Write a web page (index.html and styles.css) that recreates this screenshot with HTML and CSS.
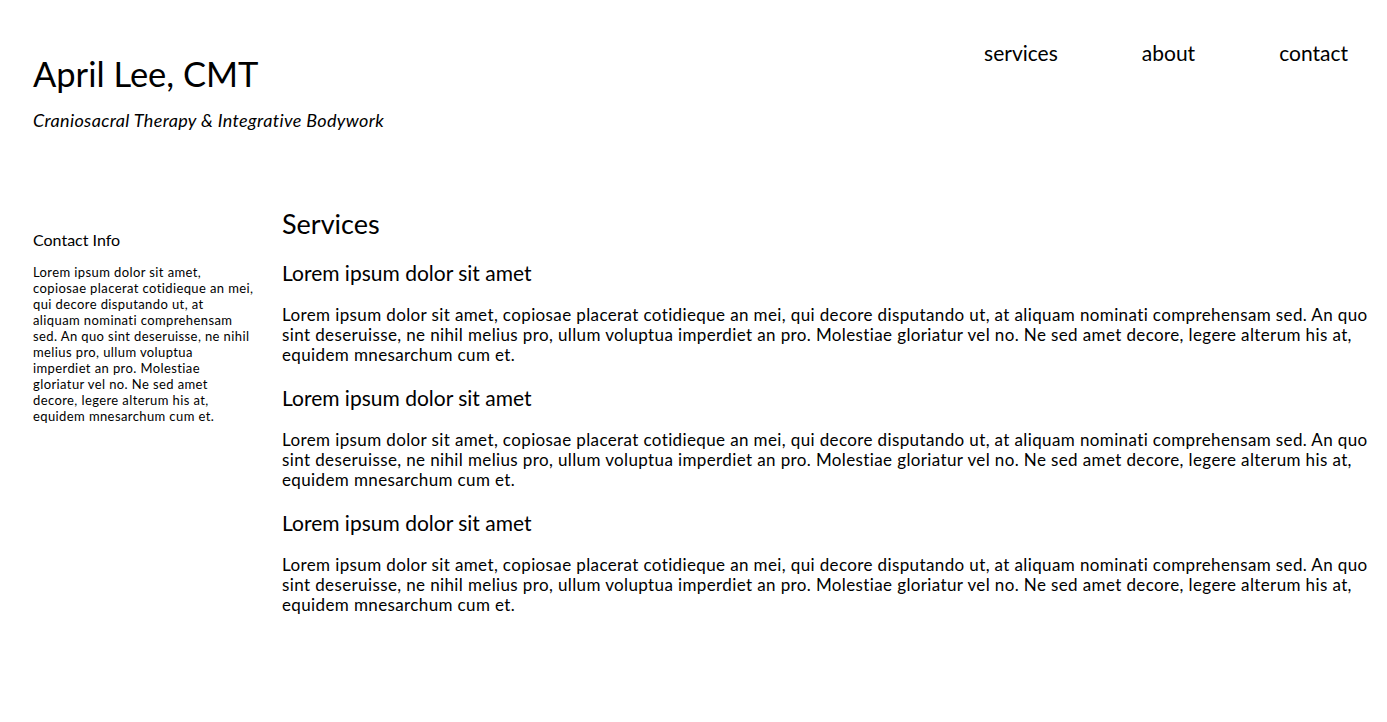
FILE: index.html
```html
<!DOCTYPE html>
<html lang="en">
<head>
<meta charset="utf-8">
<title>April Lee, CMT</title>
<link rel="stylesheet" href="styles.css">
</head>
<body>
<header class="site-header">
  <div class="brand">
    <h1 class="brand-name">April Lee, CMT</h1>
    <p class="brand-tagline">Craniosacral Therapy &amp; Integrative Bodywork</p>
  </div>
  <nav class="nav">
    <a href="#">services</a>
    <a href="#">about</a>
    <a href="#">contact</a>
  </nav>
</header>
<div class="layout">
  <aside class="sidebar">
    <h4 class="sidebar-title">Contact Info</h4>
    <p class="sidebar-text">Lorem ipsum dolor sit amet, copiosae placerat cotidieque an mei, qui decore disputando ut, at aliquam nominati comprehensam sed. An quo sint deseruisse, ne nihil melius pro, ullum voluptua imperdiet an pro. Molestiae gloriatur vel no. Ne sed amet decore, legere alterum his at, equidem mnesarchum cum et.</p>
  </aside>
  <main class="content">
    <h2 class="content-title">Services</h2>
    <section class="service">
      <h3 class="service-title">Lorem ipsum dolor sit amet</h3>
      <p class="service-text">Lorem ipsum dolor sit amet, copiosae placerat cotidieque an mei, qui decore disputando ut, at aliquam nominati comprehensam sed. An quo sint deseruisse, ne nihil melius pro, ullum voluptua imperdiet an pro. Molestiae gloriatur vel no. Ne sed amet decore, legere alterum his at, equidem mnesarchum cum et.</p>
    </section>
    <section class="service">
      <h3 class="service-title">Lorem ipsum dolor sit amet</h3>
      <p class="service-text">Lorem ipsum dolor sit amet, copiosae placerat cotidieque an mei, qui decore disputando ut, at aliquam nominati comprehensam sed. An quo sint deseruisse, ne nihil melius pro, ullum voluptua imperdiet an pro. Molestiae gloriatur vel no. Ne sed amet decore, legere alterum his at, equidem mnesarchum cum et.</p>
    </section>
    <section class="service">
      <h3 class="service-title">Lorem ipsum dolor sit amet</h3>
      <p class="service-text">Lorem ipsum dolor sit amet, copiosae placerat cotidieque an mei, qui decore disputando ut, at aliquam nominati comprehensam sed. An quo sint deseruisse, ne nihil melius pro, ullum voluptua imperdiet an pro. Molestiae gloriatur vel no. Ne sed amet decore, legere alterum his at, equidem mnesarchum cum et.</p>
    </section>
  </main>
</div>
</body>
</html>
```
FILE: styles.css
```css
* { box-sizing: border-box; }
html, body { margin: 0; padding: 0; }
body {
  font-family: Lato, "Open Sans", sans-serif;
  color: #000;
  background: #fff;
}
.site-header {
  display: flex;
  justify-content: space-between;
  align-items: flex-start;
  padding: 0 39px 0 33px;
}
.brand { padding-top: 54px; }
.brand-name {
  margin: 0;
  font-size: 34.5px;
  font-weight: 400;
  line-height: 40px;
}
.brand-tagline {
  margin: 15px 0 0;
  font-size: 18px;
  letter-spacing: 0.35px;
  font-style: italic;
  line-height: 22px;
}
.nav {
  display: flex;
  gap: 84px;
  padding-top: 40px;
}
.nav a {
  color: #000;
  text-decoration: none;
  font-size: 21px;
  line-height: 26px;
}
.layout {
  display: flex;
  gap: 28px;
  padding: 77px 15px 40px 33px;
}
.sidebar {
  width: 221px;
  flex: none;
  padding-top: 22px;
}
.sidebar-title {
  margin: 0;
  font-size: 16px;
  font-weight: 400;
  line-height: 20px;
}
.sidebar-text {
  margin: 14px 0 0;
  font-size: 13px;
  letter-spacing: 0.4px;
  line-height: 16px;
}
.content { flex: 1; min-width: 0; }
.content-title {
  margin: 0;
  font-size: 27px;
  font-weight: 400;
  line-height: 32px;
}
.service-title {
  margin: 20px 0 0;
  font-size: 21px;
  font-weight: 400;
  line-height: 26px;
}
.service-text {
  margin: 19px 0 0;
  font-size: 17px;
  letter-spacing: 0.38px;
  line-height: 20px;
}
.service + .service .service-title { margin-top: 20px; }
```
